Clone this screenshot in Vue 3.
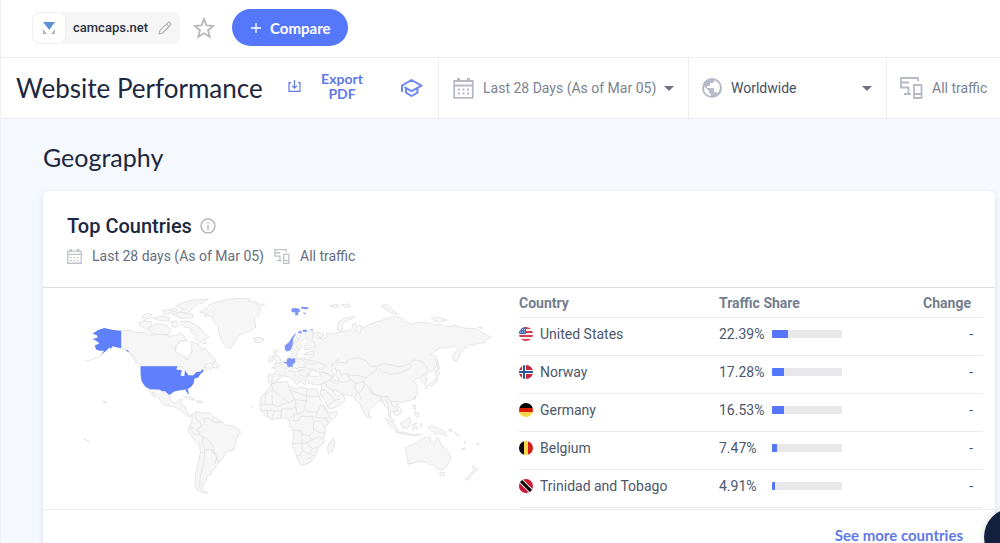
<script setup>
import { ref } from 'vue'

const region = ref('Worldwide')
const traffic = ref('All traffic')

const rows = [
  { id: 'us', name: 'United States', share: 22.39 },
  { id: 'no', name: 'Norway', share: 17.28 },
  { id: 'de', name: 'Germany', share: 16.53 },
  { id: 'be', name: 'Belgium', share: 7.47 },
  { id: 'tt', name: 'Trinidad and Tobago', share: 4.91 },
]

const land = [
  // North America
  'M153 122L176 120 200 128 222 126 240 136 270 132 300 138 320 134 330 126 342 138 350 150 330 154 314 168 316 184 332 192 345 205 352 210 356 196 366 186 362 168 366 156 384 162 394 178 404 172 414 188 430 202 436 212 420 220 404 224 400 234 392 244 378 246 368 256 354 255 344 238 322 228 211 228 200 218 190 200 176 182 164 178 153 174Z',
  'M224 290L240 297 268 298 284 302 298 312 300 326 306 336 320 338 326 328 338 328 332 342 346 350 348 362 356 374 366 372 360 380 344 374 332 360 312 350 288 346 274 336 262 320 252 308 246 306 256 322 248 318 238 304Z',
  'M424 222L436 216 448 228 440 234 426 232Z', 'M402 232L416 228 424 236 408 240Z',
  'M340 320L356 318 374 328 368 330 352 324Z', 'M378 332L394 332 398 338 380 338Z',
  // Arctic islands
  'M206 98L222 92 246 96 242 108 226 116 210 108Z', 'M230 120L246 108 268 100 292 108 302 120 296 132 270 134 244 130Z',
  'M216 78L234 70 246 74 240 84 224 88Z', 'M248 84L270 78 298 82 296 92 270 92Z', 'M276 62L300 58 304 66 284 74Z',
  'M304 72L330 66 370 74 366 84 330 84Z', 'M300 96L318 92 324 106 312 114Z', 'M328 96L350 92 376 104 392 116 404 132 416 140 402 148 408 162 388 156 372 144 378 134 362 128 360 114 340 110Z',
  'M318 48L340 36 372 30 412 28 400 38 380 44 366 56 352 70 328 66 340 58Z', 'M306 66L322 62 318 56 304 56Z',
  // Greenland, Iceland
  'M388 66L410 56 416 44 434 38 462 30 500 25 540 27 536 34 560 36 556 42 584 42 568 54 566 74 552 84 554 96 556 112 536 124 518 130 504 138 492 156 484 172 474 174 462 164 454 150 446 132 444 110 432 96 424 78 400 78 412 72Z',
  'M546 146L558 142 578 144 580 150 566 158 552 156 556 150Z',
  // South America
  'M366 372L376 364 400 368 420 368 430 380 446 388 458 396 464 404 488 408 508 420 510 428 498 444 496 462 490 478 466 486 460 500 446 518 436 524 434 534 424 542 424 550 410 558 408 570 402 576 396 590 400 600 412 608 392 606 380 598 374 580 376 548 384 514 390 486 388 464 372 450 364 436 354 422 358 406 364 398Z',
  // Africa
  'M604 280L632 276 650 274 656 288 676 296 690 290 714 296 738 296 744 314 752 332 764 352 776 366 800 364 796 378 774 398 764 412 764 428 760 444 760 458 742 472 740 486 728 508 712 520 690 524 682 508 672 482 664 460 670 440 666 418 656 406 658 392 640 382 604 388 586 378 570 360 568 340 574 318 592 298Z',
  'M788 444L794 458 784 486 774 490 770 474 776 458Z',
  // British Isles
  'M610 180L622 180 618 190 630 206 634 218 612 224 618 212 610 204 614 196Z', 'M596 200L608 196 608 212 594 216Z',
  // Sweden and Finland
  'M662 184L668 162 680 138 694 128 706 132 724 120 730 144 734 166 722 178 702 178 704 164 714 152 706 142 690 156 694 170 684 182 678 200 668 200 664 190Z',
  // Eurasia
  'M594 252L612 252 618 240 604 232 628 226 640 214 650 206 658 200 670 206 690 204 700 202 702 190 712 186 728 182 736 166 724 150 730 126 744 128 760 134 756 142 744 142 758 148 770 140 766 128 782 132 800 128 810 126 832 122 844 118 846 102 854 100 860 108 858 124 868 130 872 114 864 106 880 112 894 104 910 98 930 92 950 84 974 78 996 86 1000 94 1020 102 1040 96 1070 98 1092 104 1106 102 1130 110 1150 106 1180 114 1216 116 1242 132 1262 142 1246 148 1240 158 1220 160 1208 166 1196 162 1184 174 1172 178 1168 196 1156 214 1148 212 1144 198 1162 176 1150 168 1130 174 1108 174 1090 184 1080 194 1094 200 1098 222 1090 238 1076 246 1064 254 1070 272 1062 284 1054 274 1046 262 1034 268 1028 272 1040 284 1036 290 1042 306 1030 324 1016 332 1000 334 984 338 980 346 994 360 990 370 974 376 966 364 958 366 960 380 972 394 966 396 954 382 952 356 940 346 938 332 924 334 908 348 896 360 894 378 888 382 876 362 868 340 858 334 852 322 836 316 814 312 804 306 790 298 786 300 796 314 808 318 816 308 824 330 810 344 782 356 774 354 762 332 748 308 752 298 752 282 736 284 716 280 712 270 704 270 706 284 698 280 684 262 670 252 668 254 682 268 688 276 678 284 674 276 658 260 642 258 628 262 620 274 606 280 592 274Z',
  // Russian islands
  'M800 120L802 98 820 84 854 78 850 84 826 92 814 104 816 120 808 124Z', 'M930 48L946 42 964 58 980 72 962 70 948 60Z', 'M1080 84L1104 82 1128 90 1106 96 1088 92Z', 'M1220 112L1234 110 1232 116Z',
  'M776 46L800 44 806 50 790 54Z', 'M812 44L836 42 842 48 820 52Z',
  // Japan, Taiwan
  'M1098 206L1104 222 1106 240 1100 238Z', 'M1094 240L1108 248 1100 258 1092 252Z', 'M1098 258L1098 276 1086 286 1070 286 1074 280 1088 274Z', 'M1064 286L1070 292 1064 296Z', 'M1032 318L1036 320 1030 330Z',
  // South-east Asia
  'M944 382L956 390 976 408 982 422 970 418 954 402Z', 'M976 424L1000 426 1024 432 1054 432 1030 436 994 432Z', 'M988 400L1000 394 1016 380 1020 388 1018 404 1010 414 996 412Z', 'M1026 402L1040 396 1034 402 1042 418 1032 412 1026 420Z',
  'M1026 342L1034 346 1034 358 1028 356Z', 'M1030 364L1044 368 1042 382 1032 374Z', 'M1050 398L1054 404 1050 410Z', 'M1072 410L1084 408 1100 412 1120 422 1128 438 1112 430 1096 432 1080 420Z', 'M1132 416L1146 420 1138 426Z', 'M1152 424L1166 438 1154 430Z',
  'M896 372L900 382 896 386Z',
  // Australia, New Zealand
  'M1004 474L1024 462 1042 456 1052 446 1066 440 1080 442 1078 454 1090 460 1098 440 1108 454 1114 468 1128 480 1138 496 1138 510 1128 528 1114 538 1096 534 1086 522 1076 524 1066 514 1042 514 1012 522 1010 502Z',
  'M1106 546L1122 546 1118 556 1110 556Z', 'M1206 524L1214 534 1222 536 1208 548 1206 538Z', 'M1202 544L1206 550 1192 568 1182 568 1190 558Z',
  // Pacific
  'M1172 476L1184 472 1182 478Z', 'M1180 452L1186 456 1182 460Z', 'M1216 460L1224 458 1222 464Z', 'M96 332L110 336 106 338Z', 'M42 446L58 452 56 454Z', 'M544 348L548 346 546 352Z',
]

const borders = [
  'M378 366L376 386 390 396 392 410 382 414 388 432 372 432 362 418M392 410L404 396 398 384 416 386 424 392 440 398 458 396M430 380L424 392M446 388L440 398M388 432L398 440 412 446 424 462 432 470 430 484 436 498 446 518M398 440L396 456 404 478 396 486 390 486M404 478L424 476 430 484 440 490M404 478L400 520 390 556 388 590 396 600M424 476L424 486 440 498 434 520M356 410L370 414 380 424',
  'M604 282L606 300 584 312M606 300L656 338 672 326 660 300 654 290M584 312L584 344 570 344M584 344L606 342 604 314M606 342L622 350 640 340 656 338M660 300L708 318 710 296M708 318L708 332 674 328 676 350 662 356 634 356 630 382M708 318L750 318M708 332L702 350 706 364 740 366 752 342M676 350L680 372 702 362M630 382L634 362 612 362 604 386M656 384L672 372 680 372M672 372L668 392 684 390 690 378 722 378 730 392 728 412 730 424 716 436 694 432 692 422 668 420M722 378L742 382 764 384 774 398M730 392L750 394 764 412M728 412L744 426 764 428M716 436L722 450 742 440 760 444M722 450L706 458 694 458 694 432M666 460L694 458 696 482 688 496 678 494M696 482L716 490 726 474 706 458M716 490L728 496M712 506L718 500 722 508M726 474L742 472M740 366L736 378M752 342L770 366 780 382 764 384M570 360L590 360 592 378M590 360L612 362',
  'M606 254L604 276M622 252L642 258M650 206L648 218 654 232 642 236 646 256M656 232L676 234 690 242 672 246 660 242 652 244M672 206L696 208 704 216 704 232 682 232M704 232L728 240 716 248 708 258 690 256 682 248M728 182L730 196 712 210 700 204M712 210L738 214 764 226 758 238 742 236M716 248L710 262M704 216L718 222 740 220M702 192L724 194M690 242L704 238M684 182L676 160 692 134M704 134L710 146',
  'M752 282L764 276 778 270 784 258 768 250 756 246M764 276L770 290 792 304M778 270L800 282 806 276 800 260 784 258M806 276L830 274 842 268 856 280 852 296 862 306 852 322M856 280L880 274 880 288 866 310M842 268L824 250 812 256 806 242 798 238M782 226L804 216 828 218 832 208 864 202 886 212 902 230 916 228 918 238 900 252 888 262 862 256 842 256 824 250M888 262L876 272 896 294 910 312 934 320 950 318 960 334 982 334M918 228L938 220 960 224 984 230 1016 222 1024 210 1040 210 1060 220 1070 234 1066 248 1046 262M918 228L934 244 960 252 984 250 1012 238 1024 228 1016 222M862 306L868 316 872 330M896 294L904 310 932 318 932 332M950 318L944 330 954 342 952 356M960 334L964 346 978 350 982 362 966 364M752 298L764 300 782 318 792 330 808 326M764 352L780 340 792 330M784 230L784 220 806 206M740 250L750 246 772 250',
]

const water = [
  'M714 246L728 240 742 246 752 252 744 258 720 258Z', 'M782 240L794 234 798 246 794 256 804 266 798 274 788 264 790 252Z',
  'M318 168L332 154 350 152 364 160 364 184 354 206 336 196 316 184Z',
]
</script>

<template>
  <div class="page">
    <header class="topbar">
      <div class="site">
        <span class="site-logo">
          <svg width="14" height="14" viewBox="0 0 14 14" aria-hidden="true">
            <path d="M1 1H13L7.3 9Z" fill="#5d93cf" /><path d="M1 8V13H5ZM13 8V13H9Z" fill="#aeb8c6" />
          </svg>
        </span>
        <span class="site-name">camcaps.net</span>
        <button class="icon-btn" aria-label="Edit website">
          <svg width="14" height="14" viewBox="0 0 14 14" fill="none" stroke="#b4b4b8" stroke-width="1.2" stroke-linejoin="round">
            <path d="M1 13L2 9.4 9.6 1.8Q10.8.6 12 1.8 13.4 3.2 12.2 4.4L4.6 12ZM8.4 3L11 5.6" />
          </svg>
        </button>
      </div>
      <button class="icon-btn star" aria-label="Add to favorites">
        <svg width="22" height="22" viewBox="0 0 22 22" fill="none" stroke="#b8b8ba" stroke-width="1.8">
          <path d="M11 2.2L13.5 8.4 20.2 8.9 15 13.2 16.7 19.7 11 16.2 5.3 19.7 7 13.2 1.8 8.9 8.5 8.4Z" />
        </svg>
      </button>
      <button class="compare">
        <svg width="10" height="10" viewBox="0 0 10 10" stroke="#fff" stroke-width="1.3"><path d="M5 0V10M0 5H10" /></svg>
        Compare
      </button>
    </header>

    <div class="filters">
      <div class="heading">
        <h1>Website Performance</h1>
        <button class="export">
          <svg width="13" height="13" viewBox="0 0 13 13" fill="none" stroke="#5f79e8" stroke-width="1.2">
            <path d="M3 2.6H1V11.4H12V2.6H10M6.5 0V8M4 5.6L6.5 8.1 9 5.6" />
          </svg>
          <span>Export PDF</span>
        </button>
        <button class="icon-btn" aria-label="Learn more">
          <svg width="23" height="20" viewBox="0 0 23 20" fill="none" stroke="#6e88ee" stroke-width="2" stroke-linejoin="round">
            <path d="M2 14V7.600L11.500 2 21.500 7.600 11.500 13.200 4.500 9.200M6 10.500V14.600L11.500 18 17.500 14.600V10.500" />
          </svg>
        </button>
      </div>
      <button class="filter date">
        <svg width="21" height="21" viewBox="0 0 21 21" aria-hidden="true">
          <path d="M1.2 3H19.8V19.8H1.2ZM1 7.5H20" fill="none" stroke="#b6bac6" stroke-width="1.8" />
          <path d="M5.5 0V4M15.5 0V4" stroke="#b6bac6" stroke-width="3" />
          <path d="M5 11.5H17M5 15.5H17" stroke="#b6bac6" stroke-width="2" stroke-dasharray="2 2.5" />
        </svg>
        <span>Last 28 Days (As of Mar 05)</span>
        <i class="caret"></i>
      </button>
      <label class="filter region">
        <svg width="20" height="20" viewBox="0 0 20 20" aria-hidden="true">
          <circle cx="10" cy="10" r="10" fill="#b6bac9" />
          <path d="M2.2 8.2L7 13V14Q7 16 9 16V17.9Q2 17 2 10ZM12 2.4V3Q12 5 10 5H8V7Q8 8 7 8H5V10H11Q12 10 12 11V14H13Q14.600 14 15 15.400 18 12.500 18 10 18 4.500 12.800 2.500Z" fill="#fff" />
        </svg>
        <select v-model="region" aria-label="Country"><option>Worldwide</option></select>
        <i class="caret"></i>
      </label>
      <label class="filter traffic">
        <svg width="23" height="22" viewBox="0 0 23 22" fill="none" stroke="#b6bac6" stroke-width="1.8" aria-hidden="true">
          <path d="M18 4V1H1V10.500H8.500V17M4 17H11M1 5.500H9" /><path d="M14 8H21.500V21H14ZM14 17H21.500" />
        </svg>
        <select v-model="traffic" aria-label="Traffic source"><option>All traffic</option></select>
      </label>
    </div>

    <main class="content">
      <h2>Geography</h2>
      <section class="card">
        <div class="card-head">
          <h3>
            Top Countries
            <svg width="16" height="16" viewBox="0 0 16 16" fill="none" stroke="#b3b5ba" stroke-width="1.4" role="img" aria-label="Info">
              <circle cx="8" cy="8" r="7" /><path d="M8 7V12M8 4V5.600" />
            </svg>
          </h3>
          <div class="sub">
            <svg width="15" height="15" viewBox="0 0 14 14" aria-hidden="true">
              <path d="M.7 2H13.300V13.300H.7ZM0 5H14" fill="none" stroke="#bfc2c8" stroke-width="1.200" />
              <path d="M3.500 0V3M10.500 0V3" stroke="#bfc2c8" stroke-width="2" />
              <path d="M3 8H12M3 10.800H12" stroke="#bfc2c8" stroke-width="1.200" stroke-dasharray="1.500 1.500" />
            </svg>
            <span>Last 28 days (As of Mar 05)</span>
            <svg width="16" height="15" viewBox="0 0 23 22" fill="none" stroke="#bfc2c8" stroke-width="1.900" aria-hidden="true">
              <path d="M18 4V1H1V10.500H8.500V17M4 17H11M1 5.500H9" /><path d="M14 8H21.500V21H14ZM14 17H21.500" />
            </svg>
            <span>All traffic</span>
          </div>
        </div>

        <div class="card-body">
          <div class="map">
            <svg viewBox="0 0 1290 656" role="img" aria-label="World map of traffic by country">
              <g fill="#f6f6f6" stroke="#e2e2e2" stroke-width="2.500" stroke-linejoin="round">
                <path v-for="(d, i) in land" :key="'l' + i" :d="d" />
                <path v-for="(d, i) in borders" :key="'b' + i" :d="d" fill="none" />
                <path v-for="(d, i) in water" :key="'w' + i" :d="d" fill="#fff" />
                <path d="M48 212Q76 208 98 192M156 178L168 180 190 202 198 220" fill="none" />
              </g>
              <g fill="#6080fb">
                <path d="M153 122V174L138 171 128 168 122 176 118 172 106 184 92 194 102 182 88 182 78 178 74 166 88 160 78 152 67 147 82 143 82 137 68 130 84 120 102 114 130 120Z" />
                <path d="M168 178L178 184 170 184Z" />
                <path d="M211 228H322L318 238 335 240 331 256 342 258 344 240 354 255 368 256 378 246 392 244 395 237 401 242 390 252 384 262 372 266 370 280 362 290 352 296 357 314 348 304 346 298 330 300 312 304 298 314 290 308 284 302 276 303 268 298 240 297 224 288 214 272 211 250Z" />
              </g>
              <g fill="#7d94fa">
                <path d="M643 166L656 156 664 142 674 130 676 132 668 146 666 166 660 180 650 184 643 178Z" />
                <path d="M682 126L692 122 694 128 684 130ZM696 120L708 118 710 126 698 126ZM716 118L728 118 726 122Z" />
                <path d="M662 56L674 54 686 56 690 64 684 66 682 76 672 74 676 68 664 66ZM690 50L714 52 710 58 694 56ZM696 68L706 68 704 74Z" />
                <path d="M650 208L656 203 662 206 674 204 674 218 666 222 668 230 652 230 648 220ZM638 216L650 215 650 220 642 219Z" />
              </g>
            </svg>
          </div>

          <table>
            <thead>
              <tr><th>Country</th><th class="share">Traffic Share</th><th class="change">Change</th></tr>
            </thead>
            <tbody>
              <tr v-for="row in rows" :key="row.id">
                <td>
                  <div class="country">
                    <svg class="flag" width="14" height="14" viewBox="0 0 14 14" aria-hidden="true">
                      <g v-if="row.id === 'us'">
                        <rect width="14" height="14" fill="#f5eff1" />
                        <path d="M0 1H14M0 5H14M0 9H14M0 13H14" stroke="#d43c4f" stroke-width="2" />
                        <rect width="7" height="7" fill="#416cb4" />
                        <path d="M1 2.500H7M1 5H7" stroke="#cddaf0" stroke-width="1" stroke-dasharray="1 1" />
                      </g>
                      <g v-else-if="row.id === 'no'">
                        <rect width="14" height="14" fill="#c62540" />
                        <path d="M5 0V14M0 7H14" stroke="#fff" stroke-width="4" /><path d="M5 0V14M0 7H14" stroke="#27569b" stroke-width="2" />
                      </g>
                      <g v-else-if="row.id === 'de'">
                        <rect width="14" height="5" /><rect y="5" width="14" height="5" fill="#d81e05" /><rect y="9" width="14" height="5" fill="#fcd646" />
                      </g>
                      <g v-else-if="row.id === 'be'">
                        <rect width="5" height="14" /><rect x="5" width="4" height="14" fill="#fcd646" /><rect x="9" width="5" height="14" fill="#d0211c" />
                      </g>
                      <g v-else>
                        <rect width="14" height="14" fill="#cb1935" />
                        <path d="M0 0L14 14" stroke="#fff" stroke-width="5" /><path d="M0 0L14 14" stroke="#000" stroke-width="3.200" />
                      </g>
                    </svg>
                    {{ row.name }}
                  </div>
                </td>
                <td class="share">
                  <div class="share-cell">
                    <span>{{ row.share }}%</span>
                    <span class="track"><span class="fill" :style="{ width: row.share + '%' }"></span></span>
                  </div>
                </td>
                <td class="change">-</td>
              </tr>
            </tbody>
          </table>
        </div>

        <div class="card-foot"><a href="#countries">See more countries</a></div>
      </section>
    </main>
    <button class="help" aria-label="Help"></button>
  </div>
</template>

<style>
body { margin: 0; }
</style>

<style scoped>
* { box-sizing: border-box; }
.page {
  height: 100vh;
  overflow-x: hidden;
  overflow-y: auto;
  scrollbar-width: none;
  background: #f5f8fd;
  border-left: 1px solid #eef0f4;
  color: #4c576b;
  font: 14px/20px Roboto, sans-serif;
}
button { padding: 0; border: 0; background: none; font: inherit; color: inherit; cursor: pointer; }
svg { display: block; flex: none; }
h1, h2, h3 { margin: 0; color: #1c2740; font-weight: 400; }

.topbar {
  display: flex;
  align-items: center;
  height: 58px;
  padding: 0 31px 2px;
  background: #fff;
  border-bottom: 1px solid #eceef2;
}
.site { display: flex; align-items: center; height: 32px; padding-right: 8px; border-radius: 8px; background: #f6f6f7; }
.site-logo {
  display: grid;
  place-items: center;
  width: 34px;
  height: 32px;
  border: 1px solid #f0f0f2;
  border-radius: 8px;
  background: #fff;
}
.site-name { margin: 0 10px 0 7px; font-size: 13px; font-weight: 500; color: #2a3142; }
.star { margin: 0 17px 0 13px; }
.compare {
  display: flex;
  align-items: center;
  gap: 9px;
  height: 37px;
  padding: 0 17px 0 19px;
  border-radius: 19px;
  background: #5577fb;
  color: #fff;
  font: 700 15px/20px Lato, sans-serif;
}

.filters { display: flex; height: 61px; background: #fff; border-bottom: 1px solid #e9ebf0; }
.heading { display: flex; flex: 0 0 437px; align-items: center; padding: 0 15px; }
h1 { font: 400 26px/32px Lato, sans-serif; white-space: nowrap; }
.export {
  display: flex;
  align-items: center;
  gap: 18px;
  margin: 0 35px 4px auto;
  color: #5f79e8;
  font: 700 14px/15px Lato, sans-serif;
}
.export span { width: 46px; }
.filter {
  display: flex;
  flex: none;
  align-items: center;
  border-left: 1px solid #eceef2;
  color: #7b8390;
}
.date { width: 250px; padding: 0 14px; text-align: left; }
.date span { margin: 0 auto 0 9px; white-space: nowrap; }
.region { width: 198px; padding: 0 14px 0 13px; color: #465064; }
.traffic { width: 240px; padding-left: 13px; }
select { flex: 1; min-width: 0; margin-left: 9px; padding: 0; border: 0; background: none; appearance: none; color: inherit; font: inherit; }
.caret { flex: none; border: 5px solid transparent; border-top-color: #6d7480; border-bottom: 0; }

.content { padding: 22px 5px 24px 42px; }
h2 { font: 400 25px/32px Lato, sans-serif; }
.card { margin-top: 18px; border-radius: 6px; background: #fff; box-shadow: 0 2px 6px #0e1e3e1a; }
.card-head { padding: 23px 24px 21px; border-bottom: 1px solid #d9dce0; }
h3 { display: flex; align-items: center; gap: 8px; font: 500 20px/24px Roboto, sans-serif; }
.sub { display: flex; align-items: center; gap: 10px; margin-top: 8px; height: 20px; color: #646e7e; }
.card-body { display: grid; grid-template-columns: 1fr 1fr; align-items: start; border-bottom: 1px solid #e9ebee; }
.map { padding: 2px 18px 0 27px; }
.map svg { width: 100%; height: auto; }
table { width: calc(100% - 12px); border-collapse: separate; border-spacing: 0; table-layout: fixed; }
th, td { padding: 0; border-bottom: 1px solid #e8eaec; text-align: left; }
th { height: 30px; color: #747e8e; font-weight: 700; }
td { height: 38px; padding-bottom: 6px; }
th.share { width: 199px; }
th.change { width: 65px; padding-right: 12px; text-align: right; }
td.change { padding-right: 10px; text-align: right; }
.country, .share-cell { display: flex; align-items: center; white-space: nowrap; }
.country { gap: 7px; }
.flag { border-radius: 50%; }
.share-cell > span:first-child { width: 53px; }
.track { width: 70px; height: 8px; overflow: hidden; border-radius: 1px; background: #e8e8eb; }
.fill { display: block; height: 100%; background: #5277fb; }
.card-foot { padding: 15px 32px; text-align: right; }
.card-foot a { color: #5f79e8; font: 700 15px/20px Lato, sans-serif; text-decoration: none; }
.help {
  position: fixed;
  right: -42px;
  bottom: -23px;
  width: 58px;
  height: 58px;
  border-radius: 50%;
  background: #13213f;
  box-shadow: 0 2px 10px #0002;
}
</style>
